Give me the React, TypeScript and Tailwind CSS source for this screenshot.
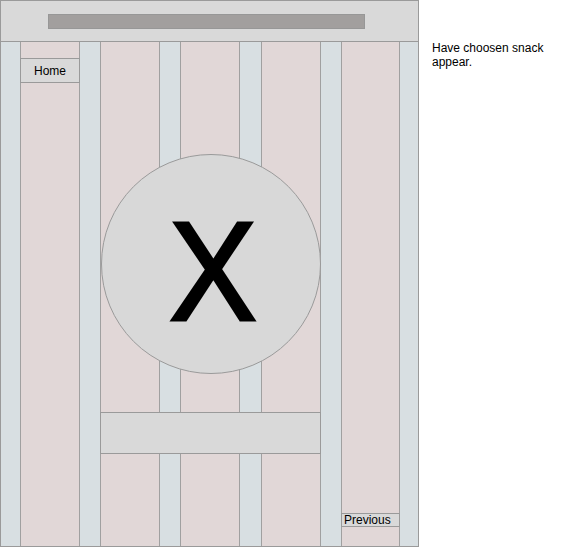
import * as React from 'react';

// Column strip widths (incl. right border), left to right
const COLS: { w: string; tone: 'blue' | 'pink'; last?: boolean }[] = [
  { w: 'w-[20px]', tone: 'blue' },
  { w: 'w-[59px]', tone: 'pink' },
  { w: 'w-[21px]', tone: 'blue' },
  { w: 'w-[59px]', tone: 'pink' },
  { w: 'w-[21px]', tone: 'blue' },
  { w: 'w-[59px]', tone: 'pink' },
  { w: 'w-[22px]', tone: 'blue' },
  { w: 'w-[59px]', tone: 'pink' },
  { w: 'w-[21px]', tone: 'blue' },
  { w: 'w-[58px]', tone: 'pink' },
  { w: 'w-[18px]', tone: 'blue', last: true },
];

export default function App() {
  return (
    <div
      className="flex w-[571px] h-[547px] bg-white text-black"
      style={{ fontFamily: '"Liberation Sans", Arial, Helvetica, sans-serif' }}
    >
      {/* wireframe frame */}
      <div className="flex flex-col w-[419px] h-[547px] border border-[#9a9a9a] shrink-0">
        <div className="h-[41px] bg-[#d9d9d9] border-b border-[#9a9a9a] pt-[13px] pl-[47px]">
          <div className="w-[317px] h-[15px] bg-[#a29f9e] border border-[#979797]" />
        </div>

        <div className="relative flex flex-1">
          {COLS.map((c, i) => (
            <div
              key={i}
              className={[
                c.w,
                'h-full',
                c.tone === 'blue' ? 'bg-[#d8dfe2]' : 'bg-[#e1d7d7]',
                c.last ? '' : 'border-r border-[#a0a0a0]',
              ].join(' ')}
            />
          ))}

          <div className="absolute left-[19px] top-[16px] w-[60px] h-[25px] bg-[#d9d9d9] border border-[#9a9a9a] flex items-center justify-center text-[12px] leading-none">
            Home
          </div>

          <div className="absolute left-[100px] top-[112px] w-[220px] h-[220px] rounded-full bg-[#d8d8d8] border border-[#9a9a9a] flex items-center justify-center">
            <span className="mt-[14px] ml-[4px] text-[141px] leading-none scale-x-[0.93] [-webkit-text-stroke:3px_black]">X</span>
          </div>

          <div className="absolute left-[99px] top-[370px] w-[221px] h-[42px] bg-[#d9d9d9] border border-[#9a9a9a]" />

          <div className="absolute left-[340px] top-[471px] w-[59px] h-[14px] bg-[#d9d9d9] border border-[#9a9a9a] pl-[2px] text-[12px] leading-[12px] overflow-hidden whitespace-nowrap">
            Previous
          </div>
        </div>
      </div>

      <div className="ml-[13px] mt-[41px] w-[125px] text-[12px] leading-[14px]">
        Have choosen snack appear.
      </div>
    </div>
  );
}
